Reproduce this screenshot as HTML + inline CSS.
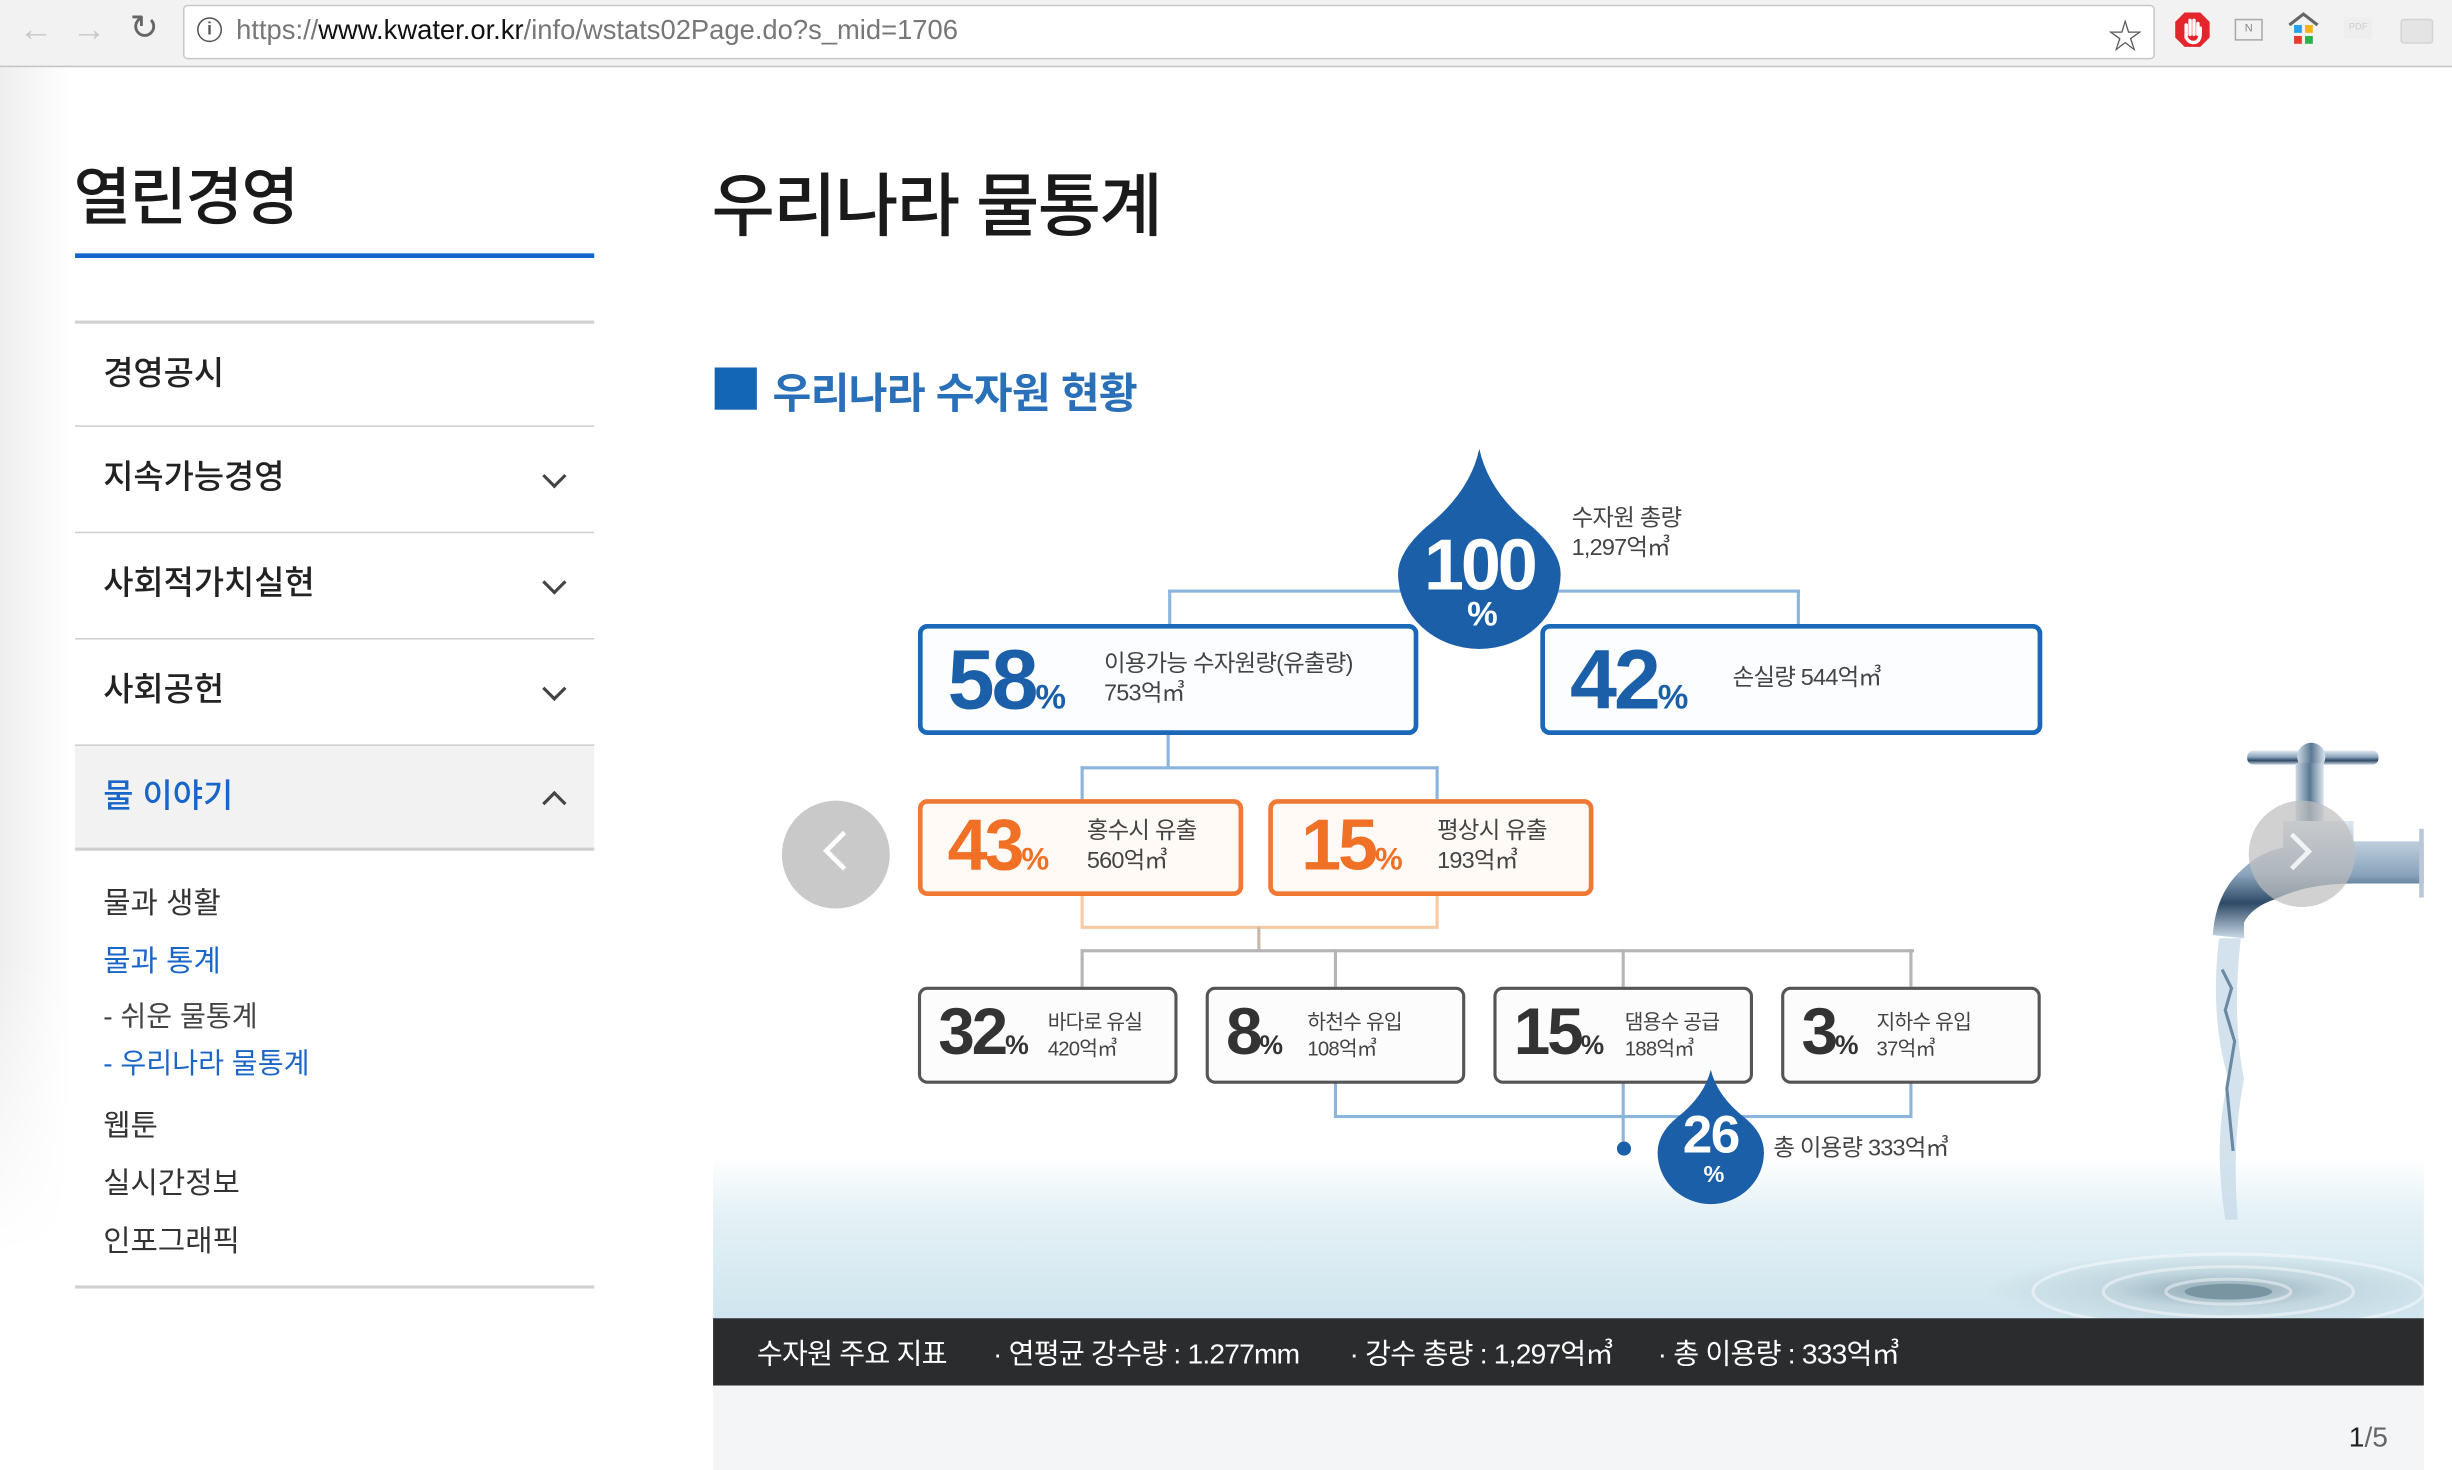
<!DOCTYPE html>
<html><head><meta charset="utf-8">
<style>
html,body{margin:0;padding:0;width:2452px;height:1470px;overflow:hidden;background:#fff}
#w{position:absolute;left:0;top:0;width:1568px;height:940px;transform:scale(1.56378);transform-origin:0 0;font-family:"Liberation Sans","Noto Sans CJK KR",sans-serif;color:#222}
.a{position:absolute}
.t{position:absolute;white-space:nowrap}
.menu{position:absolute;left:48px;width:332px;height:67px;border-top:1px solid #d0d0d0;font-size:21px;font-weight:500;color:#222;line-height:66px;box-sizing:border-box;padding-left:18px}
.chev{position:absolute;right:20px;top:26px;width:9px;height:9px;border-right:2.5px solid #444;border-bottom:2.5px solid #444;transform:rotate(45deg)}
.sub{position:absolute;left:66px;font-size:19px;color:#333;white-space:nowrap}
.box{position:absolute;box-sizing:border-box;border-radius:6px;background:#fff}
.bb{border:3px solid #1b68b8;background:#fbfdff}
.ob{border:3px solid #f07a35;background:#fffaf6}
.gb{border:2.5px solid #555;background:#fcfcfc}
.num{position:absolute;font-weight:bold;letter-spacing:-2px}
.sm{position:absolute;font-size:14px;color:#444;line-height:19px;white-space:nowrap;letter-spacing:-0.5px}
.ln{position:absolute}
</style></head><body><div id="w">
<!-- toolbar -->
<div class="a" style="left:0;top:0;width:1568px;height:42px;background:#f2f2f2;border-bottom:1px solid #c4c4c4"></div>
<div class="t" style="left:12px;top:6px;font-size:22px;color:#c8c8c8">&#8592;</div>
<div class="t" style="left:46px;top:6px;font-size:22px;color:#c8c8c8">&#8594;</div>
<div class="t" style="left:83px;top:5px;font-size:22px;color:#666">&#8635;</div>
<div class="a" style="left:117px;top:3px;width:1259px;height:33px;background:#fff;border:1px solid #c8c8c8;border-radius:3px"></div>
<div class="a" style="left:126px;top:11px;width:14px;height:14px;border:1.5px solid #555;border-radius:50%;font-size:11px;line-height:14px;text-align:center;color:#555;font-weight:bold">i</div>
<div class="t" style="left:151px;top:9px;font-size:17.5px;color:#777">https://<span style="color:#111">www.kwater.or.kr</span>/info/wstats02Page.do?s_mid=1706</div>
<div class="t" style="left:1348px;top:6px;font-size:22px;color:#555">&#9734;</div>
<svg class="a" style="left:1390px;top:7px" width="24" height="24" viewBox="0 0 24 24"><polygon points="7,1 17,1 23,7 23,17 17,23 7,23 1,17 1,7" fill="#e2262b"/><path d="M8 17 V9 M10.5 15V6 M13 15V6 M15.5 15V8 M8 17 Q10 21 14 20 Q17 19 17 14 V11" stroke="#fff" stroke-width="2.2" fill="none" stroke-linecap="round"/></svg>
<div class="a" style="left:1429px;top:12px;width:16px;height:12px;border:1.5px solid #aaa;font-size:7px;text-align:center;color:#888;line-height:12px">N</div>
<svg class="a" style="left:1462px;top:7px" width="22" height="24" viewBox="0 0 22 24"><path d="M2 9 L11 2 L20 9" stroke="#666" stroke-width="2" fill="none"/><rect x="5" y="9" width="5" height="5" fill="#2aa0e8"/><rect x="12" y="9" width="5" height="5" fill="#f7b21b"/><rect x="5" y="16" width="5" height="5" fill="#e63b2e"/><rect x="12" y="16" width="5" height="5" fill="#2bb34a"/></svg>
<div class="a" style="left:1499px;top:11px;width:18px;height:14px;background:#eee;color:#ccc;font-size:6px;line-height:14px;text-align:center">PDF</div>
<div class="a" style="left:1535px;top:12px;width:19px;height:14px;background:#e4e4e4;border:1px solid #d4d4d4;border-radius:2px"></div>
<!-- left shadow -->
<div class="a" style="left:0;top:43px;width:45px;height:760px;background:linear-gradient(90deg,#eeeeee,#fff);-webkit-mask-image:linear-gradient(180deg,#000 75%,transparent);mask-image:linear-gradient(180deg,#000 75%,transparent)"></div>
<!-- sidebar -->
<div class="t" style="left:47px;top:94px;font-size:40px;font-weight:500;color:#1a1a1a;letter-spacing:-1px">열린경영</div>
<div class="a" style="left:48px;top:162px;width:332px;height:3px;background:#1466cb"></div>
<div class="menu" style="top:205px;border-top-width:2px">경영공시</div>
<div class="menu" style="top:272px">지속가능경영<div class="chev"></div></div>
<div class="menu" style="top:340px">사회적가치실현<div class="chev"></div></div>
<div class="menu" style="top:408px">사회공헌<div class="chev"></div></div>
<div class="menu" style="top:476px;background:#f2f2f2;color:#1a66c8;height:68px;border-bottom:2px solid #d0d0d0">물 이야기<div class="chev" style="transform:rotate(-135deg);top:31px"></div></div>
<div class="sub" style="top:563px">물과 생활</div>
<div class="sub" style="top:600px;color:#1a66c8">물과 통계</div>
<div class="sub" style="top:636px;font-size:18px;color:#444">- 쉬운 물통계</div>
<div class="sub" style="top:666px;font-size:18px;color:#1a66c8">- 우리나라 물통계</div>
<div class="sub" style="top:705px">웹툰</div>
<div class="sub" style="top:742px">실시간정보</div>
<div class="sub" style="top:779px">인포그래픽</div>
<div class="a" style="left:48px;top:822px;width:332px;height:2px;background:#d0d0d0"></div>
<!-- title -->
<div class="t" style="left:455px;top:96px;font-size:44px;font-weight:500;color:#1a1a1a;letter-spacing:-1px">우리나라 물통계</div>
<div class="a" style="left:457px;top:235px;width:27px;height:27px;background:#1366b6"></div>
<div class="t" style="left:494px;top:230px;font-size:27px;font-weight:bold;color:#2a70b8;letter-spacing:-0.5px">우리나라 수자원 현황</div>
<!-- infographic background -->
<div class="a" style="left:456px;top:740px;width:1094px;height:104px;background:linear-gradient(180deg,#fff 0%,#e4f1f6 35%,#cfe5ee 100%)"></div>
<div class="a" style="left:1180px;top:780px;width:370px;height:64px;background:radial-gradient(ellipse 55% 50% at 65% 70%,#8ea7b3 0%,#c1d6df 35%,rgba(207,229,238,0) 75%)"></div>
<svg class="a" style="left:1180px;top:780px" width="370" height="64"><g fill="none" stroke="#fff" stroke-width="2" opacity=".45"><ellipse cx="245" cy="46" rx="40" ry="8"/><ellipse cx="245" cy="46" rx="80" ry="16"/><ellipse cx="245" cy="46" rx="125" ry="24"/></g><ellipse cx="245" cy="46" rx="28" ry="5" fill="#7a95a2"/></svg>
<!-- faucet -->
<svg class="a" style="left:1405px;top:470px" width="145" height="320" viewBox="0 0 145 320">
<defs><linearGradient id="m" x1="0" y1="0" x2="0" y2="1"><stop offset="0" stop-color="#dfe8f0"/><stop offset=".45" stop-color="#8ba5bd"/><stop offset=".7" stop-color="#2e4a66"/><stop offset="1" stop-color="#c9d8e6"/></linearGradient>
<linearGradient id="m2" x1="0" y1="0" x2="1" y2="0"><stop offset="0" stop-color="#cdd9e5"/><stop offset=".5" stop-color="#5a7893"/><stop offset="1" stop-color="#dbe5ee"/></linearGradient></defs>
<rect x="32" y="10" width="84" height="9" rx="4" fill="url(#m)"/>
<circle cx="73" cy="14" r="9" fill="url(#m2)"/>
<rect x="63" y="18" width="18" height="40" fill="url(#m2)"/>
<path d="M55 55 H100 V68 L145 68 V95 L100 95 Q70 95 50 105 Q35 110 30 120 L30 130 L10 128 Q12 100 30 85 Q40 75 55 72Z" fill="url(#m)"/>
<rect x="142" y="60" width="3" height="44" fill="#b8c8d8"/>
<path d="M14 130 Q8 180 20 220 Q10 260 18 310 L26 310 Q22 260 30 220 Q22 180 28 130Z" fill="#c8dbe8" opacity=".8"/>
<path d="M16 150 l6 12 l-4 14 l6 20 l-5 30 l4 40" stroke="#6a8aa3" stroke-width="2" fill="none"/>
</svg>
<div class="a" style="left:1438px;top:512px;width:68px;height:68px;border-radius:50%;background:rgba(190,190,190,.7)"></div>
<div class="a" style="left:1458px;top:536px;width:14px;height:14px;border-top:3px solid rgba(255,255,255,.8);border-right:3px solid rgba(255,255,255,.8);transform:rotate(45deg)"></div>
<!-- left arrow -->
<div class="a" style="left:500px;top:512px;width:69px;height:69px;border-radius:50%;background:#c9c9c9"></div>
<div class="a" style="left:530px;top:535px;width:15px;height:15px;border-left:3.5px solid #fff;border-bottom:3.5px solid #fff;transform:rotate(45deg)"></div>
<!-- connectors -->
<div class="ln" style="left:747px;top:377px;width:404px;height:2px;background:#8bb5dc"></div>
<div class="ln" style="left:747px;top:377px;width:2px;height:22px;background:#8bb5dc"></div>
<div class="ln" style="left:1149px;top:377px;width:2px;height:22px;background:#8bb5dc"></div>
<div class="ln" style="left:746px;top:469px;width:2px;height:22px;background:#8bb5dc"></div>
<div class="ln" style="left:691px;top:490px;width:229px;height:2px;background:#8bb5dc"></div>
<div class="ln" style="left:691px;top:490px;width:2px;height:22px;background:#8bb5dc"></div>
<div class="ln" style="left:918px;top:490px;width:2px;height:22px;background:#8bb5dc"></div>
<div class="ln" style="left:691px;top:573px;width:2px;height:20px;background:#f8c9a5"></div>
<div class="ln" style="left:918px;top:573px;width:2px;height:20px;background:#f8c9a5"></div>
<div class="ln" style="left:691px;top:592px;width:229px;height:2px;background:#f8c9a5"></div>
<div class="ln" style="left:804px;top:593px;width:2px;height:15px;background:#c8b8a8"></div>
<div class="ln" style="left:691px;top:607px;width:533px;height:2px;background:#b5b5b5"></div>
<div class="ln" style="left:691px;top:607px;width:2px;height:24px;background:#b5b5b5"></div>
<div class="ln" style="left:853px;top:607px;width:2px;height:24px;background:#b5b5b5"></div>
<div class="ln" style="left:1037px;top:607px;width:2px;height:24px;background:#b5b5b5"></div>
<div class="ln" style="left:1221px;top:607px;width:2px;height:24px;background:#b5b5b5"></div>
<div class="ln" style="left:853px;top:692px;width:2px;height:22px;background:#8bb5dc"></div>
<div class="ln" style="left:1221px;top:692px;width:2px;height:22px;background:#8bb5dc"></div>
<div class="ln" style="left:853px;top:713px;width:370px;height:2px;background:#8bb5dc"></div>
<div class="ln" style="left:1037px;top:692px;width:2px;height:42px;background:#8bb5dc"></div>
<div class="a" style="left:1034px;top:730px;width:9px;height:9px;border-radius:50%;background:#1a5fa8"></div>
<!-- boxes row1 -->
<div class="box bb" style="left:587px;top:399px;width:320px;height:71px"></div>
<div class="num" style="left:606px;top:404px;font-size:54px;color:#1a5fa8">58<span style="font-size:22px;letter-spacing:0">%</span></div>
<div class="sm" style="left:706px;top:415px;font-size:15px">이용가능 수자원량(유출량)<br>753억㎥</div>
<div class="box bb" style="left:985px;top:399px;width:321px;height:71px"></div>
<div class="num" style="left:1004px;top:404px;font-size:54px;color:#1a5fa8">42<span style="font-size:22px;letter-spacing:0">%</span></div>
<div class="sm" style="left:1108px;top:424px;font-size:15px">손실량 544억㎥</div>
<!-- drop 100 -->
<svg class="a" style="left:890px;top:285px" width="112" height="130" viewBox="0 0 112 130"><path d="M56 2 Q62 30 90 52 Q108 68 108 82 A52 48 0 0 1 4 82 Q4 68 22 52 Q50 30 56 2Z" fill="#1a5fa8"/></svg>
<div class="t" style="left:900px;top:334px;width:92px;text-align:center;font-size:46px;font-weight:bold;color:#fff;letter-spacing:-2px">100</div>
<div class="t" style="left:900px;top:380px;width:96px;text-align:center;font-size:22px;font-weight:bold;color:#fff">%</div>
<div class="sm" style="left:1005px;top:322px;font-size:15px">수자원 총량<br>1,297억㎥</div>
<!-- orange -->
<div class="box ob" style="left:587px;top:511px;width:208px;height:62px"></div>
<div class="num" style="left:606px;top:513px;font-size:46px;color:#f07025">43<span style="font-size:20px;letter-spacing:0">%</span></div>
<div class="sm" style="left:695px;top:522px;font-size:15px">홍수시 유출<br>560억㎥</div>
<div class="box ob" style="left:811px;top:511px;width:208px;height:62px"></div>
<div class="num" style="left:832px;top:513px;font-size:46px;color:#f07025">15<span style="font-size:20px;letter-spacing:0">%</span></div>
<div class="sm" style="left:919px;top:522px;font-size:15px">평상시 유출<br>193억㎥</div>
<!-- gray -->
<div class="box gb" style="left:587px;top:631px;width:166px;height:62px"></div>
<div class="num" style="left:600px;top:636px;font-size:42px;color:#333">32<span style="font-size:17px;letter-spacing:0">%</span></div>
<div class="sm" style="left:670px;top:645px;font-size:13px;line-height:17px">바다로 유실<br>420억㎥</div>
<div class="box gb" style="left:771px;top:631px;width:166px;height:62px"></div>
<div class="num" style="left:784px;top:636px;font-size:42px;color:#333">8<span style="font-size:17px;letter-spacing:0">%</span></div>
<div class="sm" style="left:836px;top:645px;font-size:13px;line-height:17px">하천수 유입<br>108억㎥</div>
<div class="box gb" style="left:955px;top:631px;width:166px;height:62px"></div>
<div class="num" style="left:968px;top:636px;font-size:42px;color:#333">15<span style="font-size:17px;letter-spacing:0">%</span></div>
<div class="sm" style="left:1039px;top:645px;font-size:13px;line-height:17px">댐용수 공급<br>188억㎥</div>
<div class="box gb" style="left:1139px;top:631px;width:166px;height:62px"></div>
<div class="num" style="left:1152px;top:636px;font-size:42px;color:#333">3<span style="font-size:17px;letter-spacing:0">%</span></div>
<div class="sm" style="left:1200px;top:645px;font-size:13px;line-height:17px">지하수 유입<br>37억㎥</div>
<!-- drop 26 -->
<svg class="a" style="left:1058px;top:683px" width="72" height="88" viewBox="0 0 72 88"><path d="M36 1 Q40 18 58 32 Q70 42 70 54 A34 33 0 0 1 2 54 Q2 42 14 32 Q32 18 36 1Z" fill="#1a5fa8"/></svg>
<div class="t" style="left:1058px;top:707px;width:72px;text-align:center;font-size:34px;font-weight:bold;color:#fff;letter-spacing:-1px">26</div>
<div class="t" style="left:1058px;top:743px;width:76px;text-align:center;font-size:15px;font-weight:bold;color:#fff">%</div>
<div class="sm" style="left:1134px;top:725px;font-size:15px">총 이용량 333억㎥</div>
<!-- dark bar -->
<div class="a" style="left:456px;top:843px;width:1094px;height:43px;background:#2b2c2e"></div>
<div class="t" style="left:484px;top:852px;font-size:18px;color:#fff;letter-spacing:-0.5px">수자원 주요 지표</div>
<div class="t" style="left:635px;top:852px;font-size:18px;color:#fff;letter-spacing:-0.5px">· 연평균 강수량 : 1.277mm</div>
<div class="t" style="left:863px;top:852px;font-size:18px;color:#fff;letter-spacing:-0.5px">· 강수 총량 : 1,297억㎥</div>
<div class="t" style="left:1060px;top:852px;font-size:18px;color:#fff;letter-spacing:-0.5px">· 총 이용량 : 333억㎥</div>
<div class="a" style="left:456px;top:886px;width:1094px;height:54px;background:#f4f5f7"></div>
<div class="t" style="left:1502px;top:909px;font-size:18px;color:#222">1<span style="color:#666">/5</span></div>
</div></body></html>
